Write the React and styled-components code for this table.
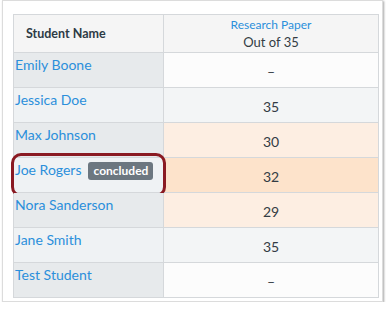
import React from 'react'
import styled, { createGlobalStyle } from 'styled-components'

const GlobalStyle = createGlobalStyle`
  html, body {
    margin: 0;
    padding: 0;
    background: #ffffff;
    font-family: Lato, "Open Sans", sans-serif;
  }
`

const Panel = styled.div`
  box-sizing: border-box;
  margin-left: 2px;
  width: 381px;
  height: 302px;
  padding: 13px 0 0 10px;
  background: #ffffff;
  border: 1px solid #dcdcdc;
  box-shadow: 1px 1px 2px rgba(0, 0, 0, 0.35);
`

const Grid = styled.div`
  display: grid;
  grid-template-columns: 150px 215px;
  grid-auto-rows: 35px;
  grid-template-rows: 38px;
  width: 366px;
  box-sizing: border-box;
  border-left: 1px solid #d5d8db;
  border-top: 1px solid #d5d8db;
`

const HeadCell = styled.div`
  box-sizing: border-box;
  background: #f5f5f5;
  border-right: 1px solid #d5d8db;
  border-bottom: 1px solid #d5d8db;
  display: flex;
  flex-direction: column;
  justify-content: center;
  align-items: ${p => (p.$center ? 'center' : 'flex-start')};
  padding-left: ${p => (p.$center ? '0' : '12px')};
  color: #2d3b45;
`

const HeadTitle = styled.span`
  font-size: 12.5px;
  font-weight: 700;
  color: #2d3b45;
`

const AssignmentLink = styled.span`
  font-size: 12px;
  line-height: 17px;
  color: #2b8fdb;
`

const OutOf = styled.span`
  font-size: 13px;
  line-height: 18px;
  color: #333c44;
`

const NameCell = styled.div`
  position: relative;
  box-sizing: border-box;
  background: ${p => (p.$odd ? '#e7eaec' : '#eff2f4')};
  border-right: 1px solid #d5d8db;
  border-bottom: 1px solid #d5d8db;
  padding: 3px 0 0 1px;
  display: flex;
  align-items: flex-start;
`

const StudentName = styled.span`
  font-size: 14px;
  line-height: 18px;
  color: #2b8fdb;
`

const Badge = styled.span`
  margin-left: 7px;
  margin-top: 1px;
  height: 18px;
  padding: 0 5px;
  border-radius: 3px;
  background: #6c7780;
  color: #ffffff;
  font-size: 12px;
  font-weight: 700;
  line-height: 18px;
`

const Highlight = styled.div`
  position: absolute;
  left: -3px;
  top: -5px;
  width: 155px;
  height: 44px;
  box-sizing: border-box;
  border: 3px solid #8a1a22;
  border-radius: 10px;
  pointer-events: none;
`

const GradeCell = styled.div`
  box-sizing: border-box;
  background: ${p => p.$bg};
  border-right: 1px solid #d5d8db;
  border-bottom: 1px solid #d5d8db;
  display: flex;
  align-items: center;
  justify-content: center;
  padding-top: 2px;
  font-size: 14px;
  color: #333c44;
`

const students = [
  { name: 'Emily Boone', grade: '–' },
  { name: 'Jessica Doe', grade: '35' },
  { name: 'Max Johnson', grade: '30', tone: 'late' },
  { name: 'Joe Rogers', grade: '32', tone: 'active', concluded: true },
  { name: 'Nora Sanderson', grade: '29', tone: 'late' },
  { name: 'Jane Smith', grade: '35' },
  { name: 'Test Student', grade: '–' },
]

const gradeBg = (tone, odd) => {
  if (tone === 'late') return '#fdeee2'
  if (tone === 'active') return '#fde3cb'
  return odd ? '#fcfcfc' : '#f3f5f6'
}

export default function App() {
  return (
    <>
      <GlobalStyle />
      <Panel>
        <Grid>
          <HeadCell>
            <HeadTitle>Student Name</HeadTitle>
          </HeadCell>
          <HeadCell $center>
            <AssignmentLink>Research Paper</AssignmentLink>
            <OutOf>Out of 35</OutOf>
          </HeadCell>
          {students.map((s, i) => {
            const odd = i % 2 === 0
            return (
              <React.Fragment key={s.name}>
                <NameCell $odd={odd}>
                  <StudentName>{s.name}</StudentName>
                  {s.concluded && <Badge>concluded</Badge>}
                  {s.concluded && <Highlight />}
                </NameCell>
                <GradeCell $bg={gradeBg(s.tone, odd)}>{s.grade}</GradeCell>
              </React.Fragment>
            )
          })}
        </Grid>
      </Panel>
    </>
  )
}
